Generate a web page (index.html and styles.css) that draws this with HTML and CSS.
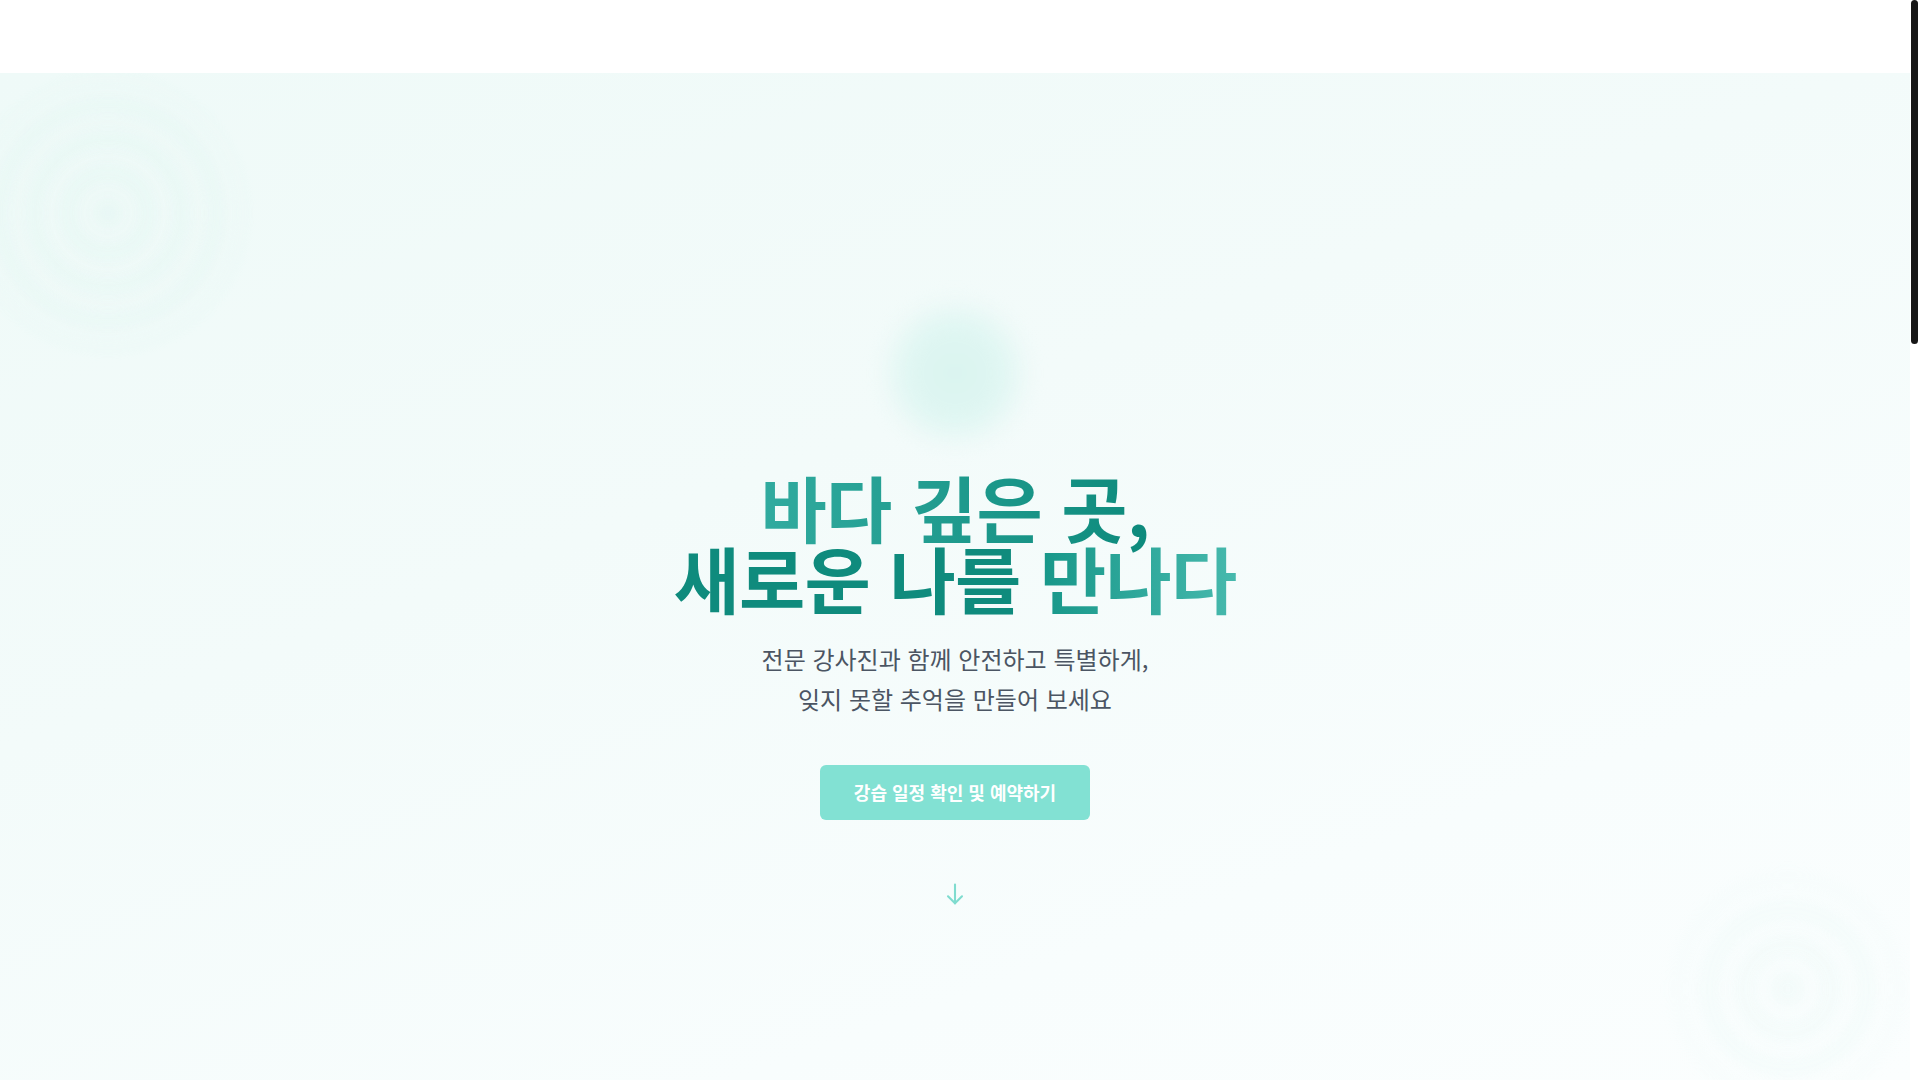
FILE: index.html
```html
<!DOCTYPE html>
<html lang="ko">
<head>
<meta charset="utf-8">
<title>바다 깊은 곳, 새로운 나를 만나다</title>
<link rel="stylesheet" href="styles.css">
</head>
<body>
<header class="site-header"></header>
<main>
  <section class="hero">
    <div class="ripple ripple-tl"></div>
    <div class="ripple ripple-br"></div>
    <div class="hero-inner">
      <div class="glow"></div>
      <h1 class="hero-title">
        <span class="t-light">바다 깊은 곳,</span><br>
        <span class="t-dark">새로운 나를 </span><span class="t-accent">만나다</span>
      </h1>
      <p class="hero-sub">전문 강사진과 함께 안전하고 특별하게,<br>잊지 못할 추억을 만들어 보세요</p>
      <a class="cta" href="#schedule">강습 일정 확인 및 예약하기</a>
      <div class="scroll-down">
        <svg viewBox="0 0 24 24" width="28" height="28" fill="none" stroke="currentColor" stroke-width="1.8" stroke-linecap="round" stroke-linejoin="round"><path d="M12 4v16"/><path d="M6 14l6 6 6-6"/></svg>
      </div>
    </div>
  </section>
  <section class="section" id="schedule"></section>
  <section class="section"></section>
</main>
<div class="fake-scrollbar"><div class="fake-thumb"></div></div>
</body>
</html>
```

FILE: styles.css
```css
html, body {
  margin: 0;
  padding: 0;
}
html {
  scrollbar-width: none;
}
::-webkit-scrollbar {
  width: 0;
  height: 0;
}
body {
  font-family: "Noto Sans CJK KR", "Noto Sans", sans-serif;
  background: #ffffff;
  color: #1f2937;
  padding-right: 10px;
}
.fake-scrollbar {
  position: fixed;
  top: 0;
  right: 0;
  width: 10px;
  height: 100vh;
  background: #ffffff;
}
.fake-thumb {
  margin: 0 0 0 1px;
  width: 7px;
  height: 344px;
  border-radius: 4px;
  background: #161616;
}
.site-header {
  height: 73px;
  background: #ffffff;
}
.hero {
  position: relative;
  overflow: hidden;
  min-height: 1007px;
  background: linear-gradient(160deg, #effaf8 0%, #f3fbfa 40%, #f8fdfd 75%, #fbfefe 100%);
}
.ripple {
  position: absolute;
  border-radius: 50%;
  filter: blur(5px);
}
.ripple-tl {
  left: -42px;
  top: -10px;
  width: 300px;
  height: 300px;
  background: repeating-radial-gradient(circle, rgba(218, 244, 238, 0.3) 0 12px, rgba(218, 244, 238, 0.08) 18px 28px, rgba(218, 244, 238, 0.3) 34px);
  -webkit-mask: radial-gradient(circle, #000 0%, rgba(0,0,0,0.7) 55%, transparent 70%);
  mask: radial-gradient(circle, #000 0%, rgba(0,0,0,0.7) 55%, transparent 70%);
}
.ripple-br {
  left: 1658px;
  top: 786px;
  width: 260px;
  height: 260px;
  background: repeating-radial-gradient(circle, rgba(226, 246, 242, 0.26) 0 14px, rgba(226, 246, 242, 0.06) 20px 30px, rgba(226, 246, 242, 0.26) 36px);
  -webkit-mask: radial-gradient(circle, #000 0%, rgba(0,0,0,0.6) 50%, transparent 70%);
  mask: radial-gradient(circle, #000 0%, rgba(0,0,0,0.6) 50%, transparent 70%);
}
.hero-inner {
  position: relative;
  display: flex;
  flex-direction: column;
  align-items: center;
  text-align: center;
  padding-top: 220px;
}
.glow {
  width: 160px;
  height: 160px;
  border-radius: 50%;
  background: radial-gradient(circle, #daf4ef 0%, #dff6f2 40%, rgba(228, 247, 244, 0) 70%);
  filter: blur(8px);
}
.hero-title {
  margin: 17px 0 0;
  font-size: 72px;
  line-height: 71px;
  font-weight: 700;
  letter-spacing: -0.01em;
}
.t-light {
  background: linear-gradient(90deg, #31ab9f 0%, #0d8a7c 100%);
  -webkit-background-clip: text;
  background-clip: text;
  color: transparent;
}
.t-dark {
  color: #0f8b7d;
}
.t-accent {
  background: linear-gradient(90deg, #179789 0%, #47b9ad 100%);
  -webkit-background-clip: text;
  background-clip: text;
  color: transparent;
}
.hero-sub {
  margin: 27px 0 0;
  font-size: 24px;
  line-height: 40px;
  font-weight: 400;
  color: #4b5563;
}
.cta {
  margin-top: 46px;
  display: inline-block;
  padding: 14px 34px;
  background: #82e1d3;
  color: #ffffff;
  font-size: 18px;
  line-height: 27px;
  font-weight: 700;
  text-decoration: none;
  border-radius: 6px;
}
.scroll-down {
  margin-top: 60px;
  color: #7fdccf;
  height: 28px;
}
.scroll-down svg {
  display: block;
}
.section {
  min-height: 1160px;
  background: #ffffff;
}
```
